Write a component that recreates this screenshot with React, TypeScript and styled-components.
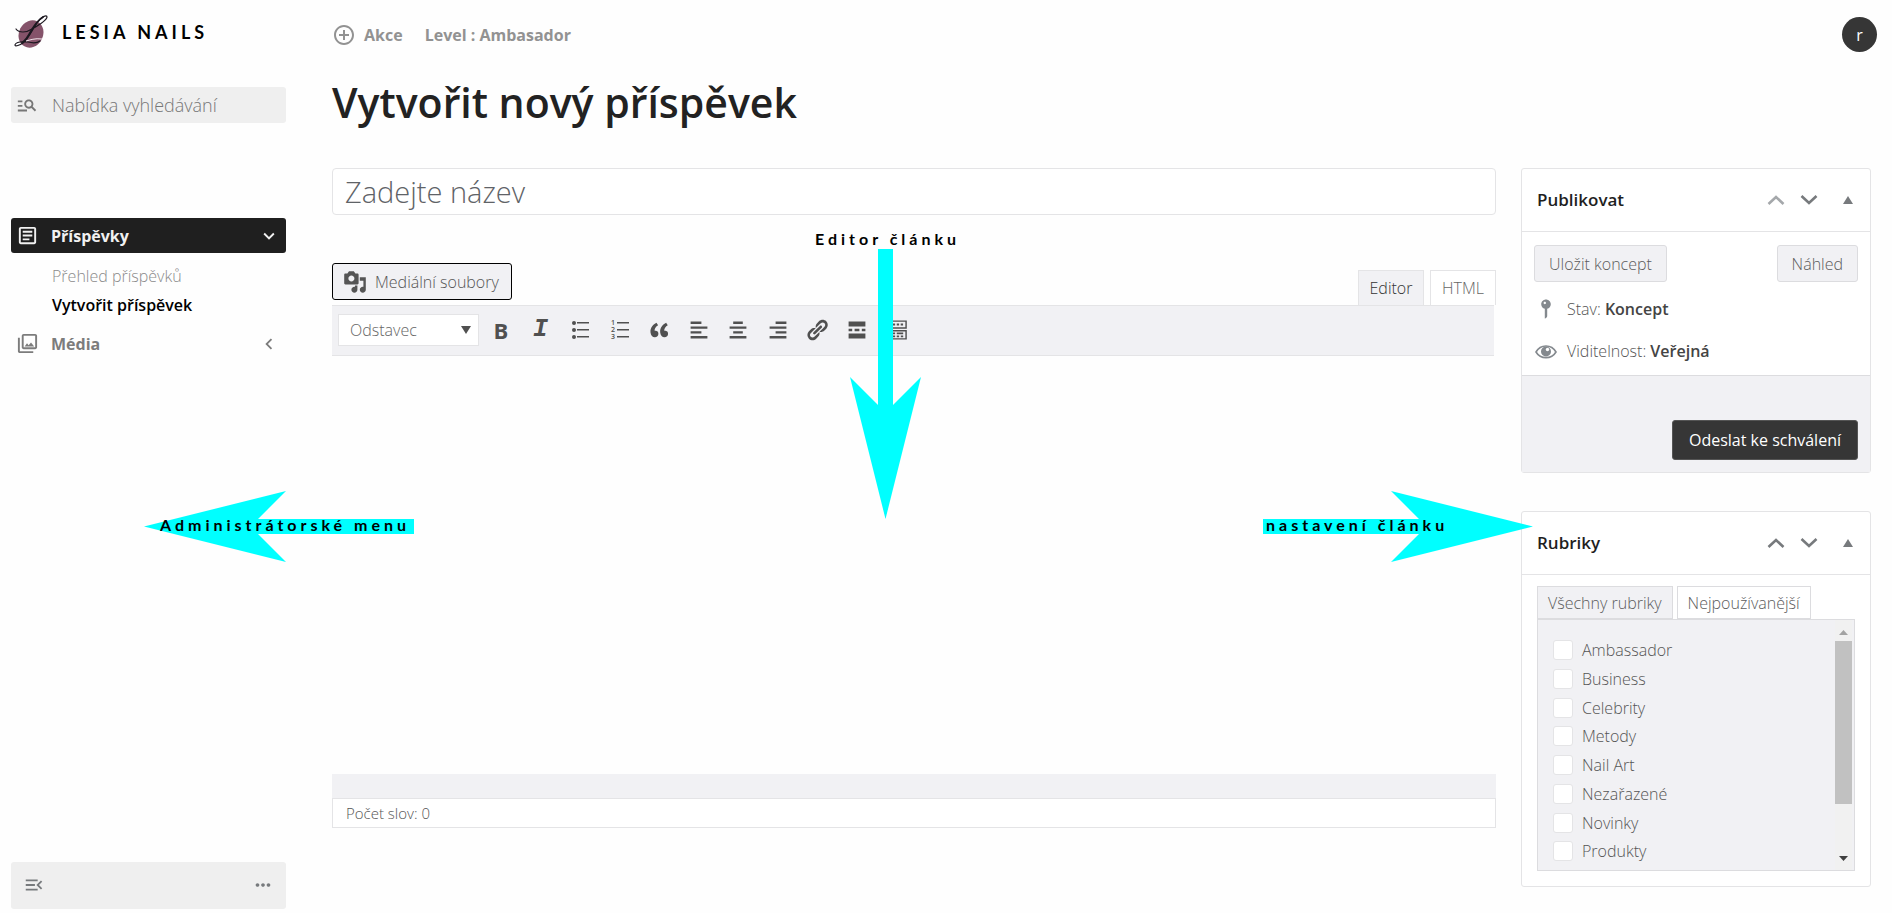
import React from "react";
import styled, { createGlobalStyle } from "styled-components";
import {
  MdAddCircleOutline,
  MdKeyboardArrowDown,
  MdKeyboardArrowLeft,
  MdManageSearch,
  MdMenuOpen,
  MdMoreHoriz,
  MdOutlineArticle,
  MdOutlinePhotoLibrary,
} from "react-icons/md";

const line = "#e4e4e6";
const soft = "#f1f1f4";
const muted = "#8a8a8a";
const ink = "#1f1f1f";

const GlobalStyle = createGlobalStyle`
  *, *::before, *::after { box-sizing: border-box; }
  body {
    margin: 0;
    background: #fefefe;
    color: #555;
    font-family: "Open Sans", "Noto Sans", sans-serif;
    font-size: 16px;
    font-weight: 300;
    line-height: 24px;
  }
  button, input, select, textarea { font: inherit; color: inherit; margin: 0; }
  button { cursor: pointer; }
  a { color: inherit; text-decoration: none; }
  svg { display: block; flex: none; }
`;

const Page = styled.div`
  position: relative;
  display: grid;
  grid-template-columns: 286px minmax(0, 1fr);
  min-height: 100vh;
  overflow: hidden;
`;

/* ---------- sidebar ---------- */

const Sidebar = styled.aside`
  display: flex;
  flex-direction: column;
  padding: 12px 0 4px 11px;
`;

const Brand = styled.a`
  display: flex;
  align-items: center;
  gap: 13px;
  height: 40px;
  color: #000;
  font-family: Lato, sans-serif;
  font-size: 18px;
  font-weight: 700;
  letter-spacing: 4px;
`;

const SearchBox = styled.label`
  display: flex;
  align-items: center;
  gap: 14px;
  height: 36px;
  margin-top: 35px;
  padding-left: 5px;
  border-radius: 3px;
  background: #efefef;
  color: #777;
  font-size: 18px;

  input {
    flex: 1;
    min-width: 0;
    padding: 0;
    border: 0;
    outline: 0;
    background: transparent;
  }
  input::placeholder { color: #777; opacity: 1; }
`;

const Nav = styled.nav`
  display: flex;
  flex-direction: column;
  margin-top: 95px;
`;

const NavItem = styled.a<{ $active?: boolean }>`
  display: flex;
  align-items: center;
  gap: 12px;
  height: 35px;
  padding: 0 6px 0 5px;
  border-radius: 3px;
  background: ${(p) => (p.$active ? ink : "transparent")};
  color: ${(p) => (p.$active ? "#f1f1f1" : "#7c7c7c")};
  font-weight: 700;

  svg:last-child { margin-left: auto; }
`;

const SubNav = styled.div`
  display: flex;
  flex-direction: column;
  gap: 5px;
  padding: 11px 0 9px 41px;
`;

const SubLink = styled.a<{ $current?: boolean }>`
  color: ${(p) => (p.$current ? "#000" : muted)};
  font-weight: ${(p) => (p.$current ? 600 : 300)};
`;

const SidebarFooter = styled.div`
  display: flex;
  align-items: center;
  justify-content: space-between;
  height: 47px;
  margin-top: auto;
  padding: 0 12px 2px;
  border-radius: 3px;
  background: #efefef;
`;

const IconButton = styled.button<{ $dim?: boolean }>`
  display: flex;
  align-items: center;
  justify-content: center;
  padding: 0;
  border: 0;
  background: transparent;
  color: ${(p) => (p.$dim ? "#a5a8ab" : "#777a7d")};
`;

/* ---------- main column ---------- */

const Main = styled.main`
  padding: 17px 15px 24px 46px;
`;

const TopBar = styled.header`
  display: flex;
  align-items: center;
  gap: 22px;
  height: 35px;
  color: #929292;
  font-weight: 700;
`;

const TopLink = styled.a`
  display: flex;
  align-items: center;
  gap: 8px;
`;

const Avatar = styled.button`
  width: 35px;
  height: 35px;
  margin-left: auto;
  padding: 0;
  border: 0;
  border-radius: 50%;
  background: #363636;
  color: #fff;
  font-weight: 400;
`;

const Title = styled.h1`
  margin: 22px 0 0;
  color: #222;
  font-size: 41px;
  font-weight: 600;
  line-height: 56px;
`;

const Columns = styled.div`
  display: grid;
  grid-template-columns: minmax(0, 1fr) 350px;
  gap: 25px;
  align-items: start;
  margin-top: 38px;
  padding-right: 6px;
`;

const Editor = styled.section`
  display: flex;
  flex-direction: column;
`;

const TitleInput = styled.input`
  width: 100%;
  height: 47px;
  padding: 0 12px;
  border: 1px solid ${line};
  border-radius: 4px;
  outline: 0;
  background: #fff;
  font-size: 29px;

  &::placeholder { color: #5f6367; opacity: 1; }
`;

const EditorBar = styled.div`
  display: flex;
  align-items: flex-start;
  justify-content: space-between;
  height: 42px;
  margin-top: 48px;
`;

const MediaButton = styled.button`
  display: flex;
  align-items: center;
  gap: 8px;
  height: 37px;
  padding: 0 12px 0 10px;
  border: 1px solid #000;
  border-radius: 3px;
  background: ${soft};
`;

const Tabs = styled.div`
  display: flex;
  align-self: flex-end;
  gap: 6px;
`;

const Tab = styled.button<{ $active?: boolean }>`
  width: 66px;
  height: 35px;
  padding: 0;
  border: 1px solid ${line};
  border-bottom: 0;
  background: ${(p) => (p.$active ? soft : "#fff")};
  color: ${(p) => (p.$active ? "#333" : "#666")};
`;

const Toolbar = styled.div`
  display: flex;
  align-items: center;
  gap: 7px;
  height: 51px;
  margin-right: 2px;
  padding: 0 0 2px 6px;
  border: solid ${line};
  border-width: 1px 0;
  background: ${soft};
`;

const FormatBox = styled.div`
  display: grid;
  align-items: center;
  width: 141px;
  height: 32px;
  border: 1px solid ${line};
  background: #fff;

  select, svg { grid-area: 1 / 1; }
  select {
    width: 100%;
    height: 30px;
    padding: 0 11px;
    border: 0;
    outline: 0;
    appearance: none;
    background: transparent;
    color: #666;
  }
  svg { justify-self: end; margin-right: 7px; pointer-events: none; }
`;

const Tools = styled.div`
  display: flex;
  justify-content: space-between;
  width: 425px;
`;

const Tool = styled.button<{ $bold?: boolean; $italic?: boolean }>`
  display: flex;
  align-items: center;
  justify-content: center;
  width: 30px;
  height: 30px;
  padding: 0;
  border: 0;
  background: transparent;
  color: #505050;
  font-family: ${(p) => (p.$italic ? '"Liberation Mono", monospace' : "inherit")};
  font-size: ${(p) => (p.$italic ? "25px" : "22px")};
  line-height: ${(p) => (p.$italic ? "30px" : "24px")};
  font-style: ${(p) => (p.$italic ? "italic" : "normal")};
  font-weight: ${(p) => (p.$bold || p.$italic ? 700 : 400)};
`;

const Canvas = styled.textarea`
  width: 100%;
  height: 418px;
  padding: 12px;
  border: 0;
  outline: 0;
  resize: none;
  background: transparent;
`;

const PathBar = styled.div`
  height: 24px;
  background: ${soft};
`;

const WordCount = styled.div`
  padding: 2px 13px;
  border: 1px solid ${line};
  background: #fff;
  font-size: 15px;
`;

/* ---------- meta boxes ---------- */

const Side = styled.div`
  display: flex;
  flex-direction: column;
  gap: 38px;
`;

const Box = styled.section`
  border: 1px solid ${line};
  border-radius: 3px;
  background: #fff;
`;

const BoxHead = styled.header`
  display: flex;
  align-items: center;
  height: 63px;
  padding: 0 17px 0 15px;
  border-bottom: 1px solid ${line};
`;

const BoxTitle = styled.h2`
  flex: 1;
  margin: 0;
  color: ${ink};
  font-size: 17px;
  font-weight: 600;
  line-height: 24px;
`;

const BoxActions = styled.div`
  display: flex;
  align-items: center;
  gap: 15px;

  button:last-child { margin-left: 10px; }
`;

const PublishBody = styled.div`
  display: flex;
  flex-direction: column;
  gap: 12px;
  padding: 13px 12px 9px;
`;

const ButtonRow = styled.div`
  display: flex;
  justify-content: space-between;
`;

const SoftButton = styled.button`
  height: 37px;
  padding: 0 14px;
  border: 1px solid #dcdcdf;
  border-radius: 3px;
  background: ${soft};
  color: #5c5c5c;
`;

const Meta = styled.p`
  display: flex;
  align-items: center;
  gap: 9px;
  height: 30px;
  margin: 0;

  svg { color: #84898e; }
  strong { color: #444; font-weight: 600; }
`;

const PublishFoot = styled.div`
  display: flex;
  justify-content: flex-end;
  padding: 44px 12px 12px;
  border-top: 1px solid #dcdcdf;
  background: ${soft};
`;

const SubmitButton = styled.button`
  height: 40px;
  padding: 0 16px;
  border: 1px solid #555;
  border-radius: 3px;
  background: #363636;
  color: #fff;
  font-weight: 400;
`;

const TermsBody = styled.div`
  padding: 11px 15px 15px;
`;

const TermTabs = styled.div`
  display: flex;
  gap: 4px;
`;

const TermTab = styled.button<{ $active?: boolean }>`
  height: 33px;
  padding: 0 10px;
  border: 1px solid #dcdcdf;
  background: ${(p) => (p.$active ? soft : "#fff")};
  color: #5c5c5c;
`;

const TermPanel = styled.div`
  display: flex;
  height: 252px;
  padding: 0 2px 0 15px;
  border: 1px solid #dcdcdf;
  background: ${soft};
  overflow: hidden;
`;

const TermList = styled.ul`
  display: flex;
  flex: 1;
  flex-direction: column;
  justify-content: space-between;
  height: 254px;
  margin: 18px 0 0;
  padding: 0;
  list-style: none;
`;

const Term = styled.label`
  display: flex;
  align-items: center;
  gap: 9px;
  height: 24px;

  input {
    flex: none;
    width: 20px;
    height: 20px;
    border: 1px solid ${line};
    border-radius: 3px;
    appearance: none;
    background: #fff;
  }
  input:checked { background: #555; }
`;

const ScrollTrack = styled.div`
  display: flex;
  flex-direction: column;
  align-items: center;
  width: 17px;
  height: 250px;
  padding: 9px 0 8px;
  background: #f1f1f1;
`;

const ScrollThumb = styled.div`
  width: 17px;
  height: 163px;
  margin: 5px 0 auto;
  background: #c1c1c1;
`;

/* ---------- callouts lying over the page ---------- */

const Callout = styled.div<{ $dir: "down" | "left" | "right" }>`
  position: absolute;
  pointer-events: none;
  ${(p) =>
    p.$dir === "down"
      ? "top: 249px; left: 850px;"
      : p.$dir === "left"
      ? "top: 491px; left: 144px;"
      : "top: 491px; right: 359px;"}

  svg { color: #0ff; }
`;

const CalloutText = styled.span<{ $dir: "down" | "left" | "right" }>`
  position: absolute;
  top: ${(p) => (p.$dir === "down" ? "-22px" : "22px")};
  left: ${(p) => (p.$dir === "down" ? "-35px" : p.$dir === "left" ? "16px" : "3px")};
  color: #000;
  font-family: Lato, sans-serif;
  font-size: 16px;
  font-weight: 700;
  letter-spacing: 4px;
  white-space: nowrap;
`;

/* ---------- drawings ---------- */

const Logo = () => (
  <svg width="38" height="36" viewBox="0 0 38 36" fill="none" aria-hidden="true">
    <ellipse cx="20" cy="20" rx="12" ry="14" transform="rotate(28 20 20)" fill="#85536a" />
    <path
      d="M5 15c3 4 10 4 16 0 7-4 15-9 15-12 0-3-6 0-10 6-5 7-8 15-14 20-3 2-8 4-8 2 0-3 9-4 13-3 4 1 8 2 12-1"
      stroke="#1c1820"
      strokeWidth="1.2"
      strokeLinecap="round"
    />
    <path d="M32 3c-5 3-9 9-12 14-2 4-5 9-9 12" stroke="#1c1820" strokeWidth="1.800" strokeLinecap="round" />
    <path d="M15 27c4-1 9-3 16-2" stroke="#f4e9ee" strokeWidth="1" />
  </svg>
);

const Glyph = ({ d, size = 24 }: { d: string; size?: number }) => (
  <svg width={size} height={size} viewBox="0 0 20 20" fill="currentColor" fillRule="evenodd" aria-hidden="true">
    <path d={d} />
  </svg>
);

const paths = {
  media:
    "M13 11V4c0-.55-.45-1-1-1h-1.67L9 1H5L3.67 3H2c-.55 0-1 .45-1 1v7c0 .55.45 1 1 1h10c.55 0 1-.45 1-1zM7 4.5c1.38 0 2.5 1.12 2.5 2.5S8.38 9.5 7 9.5 4.5 8.38 4.5 7 5.62 4.5 7 4.5zM14 6h5v10.5c0 1.38-1.12 2.5-2.5 2.5S14 17.88 14 16.5s1.12-2.5 2.5-2.5c.17 0 .34.02.5.05V9h-3V6zm-4 8.05V13h2v3.5c0 1.38-1.12 2.5-2.5 2.5S7 17.88 7 16.5 8.12 14 9.5 14c.17 0 .34.02.5.05z",
  quote:
    "M9.49 13.22c0-.74-.2-1.38-.61-1.9-.62-.78-1.83-.88-2.53-.72-.29-1.65 1.11-3.75 2.92-4.65L7.88 4c-2.73 1.3-5.42 4.28-4.96 8.05C3.21 14.43 4.59 16 6.54 16c.85 0 1.56-.25 2.12-.75s.83-1.18.83-2.03zm8.05 0c0-.74-.2-1.38-.61-1.9-.63-.78-1.83-.88-2.53-.72-.29-1.65 1.11-3.75 2.92-4.65L15.94 4c-2.73 1.3-5.41 4.28-4.95 8.05.28 2.38 1.66 3.95 3.61 3.95.85 0 1.56-.25 2.12-.75s.82-1.18.82-2.03z",
  left: "M12 5V3H3v2h9zm5 4V7H3v2h14zm-5 4v-2H3v2h9zm5 4v-2H3v2h14z",
  center: "M14 5V3H6v2h8zm3 4V7H3v2h14zm-3 4v-2H6v2h8zm3 4v-2H3v2h14z",
  right: "M17 5V3H8v2h9zm0 4V7H3v2h14zm0 4v-2H8v2h9zm0 4v-2H3v2h14z",
  link: "M17.74 2.76c1.68 1.69 1.68 4.41 0 6.1l-1.53 1.52c-1.12 1.12-2.7 1.47-4.14 1.09l2.62-2.61.76-.77.76-.76c.84-.84.84-2.2 0-3.04-.84-.85-2.2-.85-3.04 0l-.77.76-3.38 3.38c-.37-1.44-.02-3.02 1.1-4.14l1.52-1.53c1.69-1.68 4.42-1.68 6.1 0zM8.59 13.43l5.34-5.34c.42-.42.42-1.1 0-1.52-.44-.43-1.13-.39-1.53 0l-5.33 5.34c-.42.42-.42 1.1 0 1.52.44.43 1.13.39 1.52 0zm-.76 2.29l4.14-4.15c.38 1.44.03 3.02-1.09 4.14l-1.52 1.53c-1.69 1.68-4.41 1.68-6.1 0-1.68-1.68-1.68-4.42 0-6.1l1.53-1.52c1.12-1.12 2.7-1.47 4.14-1.1l-4.14 4.15c-.85.84-.85 2.2 0 3.05.84.84 2.2.84 3.04 0z",
  more: "M17 7V3H3v4h14zM6 11V9H3v2h3zm6 0V9H8v2h4zm5 0V9h-3v2h3zm0 6v-4H3v4h14z",
  sink: "M1 2h18v7H1zM2.200 3.200v4.600h15.600V3.200zM1 10h18v8H1zM2.200 11.200v5.600h15.600v-5.600zM4 4.500h2v1.800H4zm3.300 0h2v1.800h-2zm3.300 0h2v1.800h-2zm3.300 0h2v1.800h-2zM4 12h2v1.500H4zm3.300 0h2v1.500h-2zm3.300 0h5.400v1.500h-5.400zM4 14.500h5.300V16H4zm6.600 0h2V16h-2zm3.400 0h2V16h-2z",
  pin: "M14 6c0 1.860-1.280 3.410-3 3.860V16c0 1-2 2-2 2V9.860c-1.720-.45-3-2-3-3.860 0-2.210 1.790-4 4-4s4 1.790 4 4zM8 5c0 .55.45 1 1 1s1-.45 1-1-.45-1-1-1-1 .45-1 1z",
};

const List = ({ ordered }: { ordered?: boolean }) => (
  <svg width="24" height="24" viewBox="0 0 24 24" fill="currentColor" aria-hidden="true">
    {[5, 12, 19].map((y, i) => (
      <g key={y}>
        {ordered ? (
          <text x="3" y={y + 2} fontSize="7" fontWeight="600" fontFamily="Open Sans, sans-serif">
            {i + 1}
          </text>
        ) : (
          <circle cx="6" cy={y} r="2" />
        )}
        <rect x="9" y={y - 1} width="12" height="1.500" />
      </g>
    ))}
  </svg>
);

const Eye = () => (
  <svg width="24" height="24" viewBox="0 0 24 24" fill="none" stroke="currentColor" aria-hidden="true">
    <path d="M2 13c4.500-8 15.500-8 20 0-4.500 7.500-15.500 7.500-20 0z" strokeWidth="1.600" />
    <circle cx="12" cy="12.500" r="5" fill="currentColor" stroke="none" />
    <circle cx="13.500" cy="10.500" r="1.700" fill="#fff" stroke="none" />
  </svg>
);

const Chevron = ({ up }: { up?: boolean }) => (
  <svg width="18" height="12" viewBox="0 0 18 12" fill="none" stroke="currentColor" strokeWidth="2.600" aria-hidden="true">
    <path d={up ? "M1.500 10 9 3l7.500 7" : "M1.500 2 9 9l7.500-7"} />
  </svg>
);

const Triangle = ({ down, size = 10, color = "#777a7d" }: { down?: boolean; size?: number; color?: string }) => (
  <svg width={size} height={size} viewBox="0 0 10 10" fill={color} aria-hidden="true">
    <path d={down ? "M0 1h10L5 9z" : "M0 9h10L5 1z"} />
  </svg>
);

const ScrollArrow = ({ down }: { down?: boolean }) => (
  <svg width="9" height="7" viewBox="0 0 9 7" aria-hidden="true">
    <path d={down ? "M0 1h9L4.500 6z" : "M0 6h9L4.500 1z"} fill={down ? "#404040" : "#a3a3a3"} />
  </svg>
);

const BoxHeader = ({ title, first }: { title: string; first?: boolean }) => (
  <BoxHead>
    <BoxTitle>{title}</BoxTitle>
    <BoxActions>
      <IconButton $dim={first} aria-label={`${title}: nahoru`}>
        <Chevron up />
      </IconButton>
      <IconButton aria-label={`${title}: dolů`}>
        <Chevron />
      </IconButton>
      <IconButton aria-label={`${title}: sbalit`}>
        <Triangle />
      </IconButton>
    </BoxActions>
  </BoxHead>
);

const terms = ["Ambassador", "Business", "Celebrity", "Metody", "Nail Art", "Nezařazené", "Novinky", "Produkty"];

export default function App() {
  return (
    <Page>
      <GlobalStyle />

      <Sidebar>
        <Brand href="#">
          <Logo />
          LESIA NAILS
        </Brand>
        <SearchBox>
          <MdManageSearch size={22} />
          <input type="text" placeholder="Nabídka vyhledávání" aria-label="Nabídka vyhledávání" />
        </SearchBox>
        <Nav>
          <NavItem href="#" $active>
            <MdOutlineArticle size={23} />
            Příspěvky
            <MdKeyboardArrowDown size={22} />
          </NavItem>
          <SubNav>
            <SubLink href="#">Přehled příspěvků</SubLink>
            <SubLink href="#" $current>
              Vytvořit příspěvek
            </SubLink>
          </SubNav>
          <NavItem href="#">
            <MdOutlinePhotoLibrary size={23} />
            Média
            <MdKeyboardArrowLeft size={22} />
          </NavItem>
        </Nav>
        <SidebarFooter>
          <IconButton aria-label="Sbalit menu">
            <MdMenuOpen size={22} />
          </IconButton>
          <IconButton aria-label="Další">
            <MdMoreHoriz size={22} />
          </IconButton>
        </SidebarFooter>
      </Sidebar>

      <Main>
        <TopBar>
          <TopLink href="#">
            <MdAddCircleOutline size={24} />
            Akce
          </TopLink>
          <TopLink href="#">Level : Ambasador</TopLink>
          <Avatar>r</Avatar>
        </TopBar>

        <Title>Vytvořit nový příspěvek</Title>

        <Columns>
          <Editor>
            <TitleInput type="text" placeholder="Zadejte název" aria-label="Zadejte název" />
            <EditorBar>
              <MediaButton>
                <Glyph d={paths.media} />
                Mediální soubory
              </MediaButton>
              <Tabs>
                <Tab $active>Editor</Tab>
                <Tab>HTML</Tab>
              </Tabs>
            </EditorBar>
            <Toolbar>
              <FormatBox>
                <select aria-label="Formát">
                  <option>Odstavec</option>
                </select>
                <Triangle down size={10} color="#505050" />
              </FormatBox>
              <Tools>
                <Tool $bold>B</Tool>
                <Tool $italic>I</Tool>
                <Tool aria-label="Seznam s odrážkami">
                  <List />
                </Tool>
                <Tool aria-label="Číslovaný seznam">
                  <List ordered />
                </Tool>
                <Tool aria-label="Citace">
                  <Glyph d={paths.quote} />
                </Tool>
                <Tool aria-label="Zarovnat vlevo">
                  <Glyph d={paths.left} />
                </Tool>
                <Tool aria-label="Zarovnat na střed">
                  <Glyph d={paths.center} />
                </Tool>
                <Tool aria-label="Zarovnat vpravo">
                  <Glyph d={paths.right} />
                </Tool>
                <Tool aria-label="Odkaz">
                  <Glyph d={paths.link} />
                </Tool>
                <Tool aria-label="Číst dále">
                  <Glyph d={paths.more} />
                </Tool>
                <Tool aria-label="Další nástroje">
                  <Glyph d={paths.sink} />
                </Tool>
              </Tools>
            </Toolbar>
            <Canvas aria-label="Obsah" />
            <PathBar />
            <WordCount>Počet slov: 0</WordCount>
          </Editor>

          <Side>
            <Box>
              <BoxHeader title="Publikovat" first />
              <PublishBody>
                <ButtonRow>
                  <SoftButton>Uložit koncept</SoftButton>
                  <SoftButton>Náhled</SoftButton>
                </ButtonRow>
                <Meta>
                  <Glyph d={paths.pin} />
                  <span>
                    Stav: <strong>Koncept</strong>
                  </span>
                </Meta>
                <Meta>
                  <Eye />
                  <span>
                    Viditelnost: <strong>Veřejná</strong>
                  </span>
                </Meta>
              </PublishBody>
              <PublishFoot>
                <SubmitButton>Odeslat ke schválení</SubmitButton>
              </PublishFoot>
            </Box>

            <Box>
              <BoxHeader title="Rubriky" />
              <TermsBody>
                <TermTabs>
                  <TermTab $active>Všechny rubriky</TermTab>
                  <TermTab>Nejpoužívanější</TermTab>
                </TermTabs>
                <TermPanel>
                  <TermList>
                    {terms.map((name) => (
                      <li key={name}>
                        <Term>
                          <input type="checkbox" />
                          {name}
                        </Term>
                      </li>
                    ))}
                    <li>
                      <Term>
                        <input type="checkbox" aria-label="Rubrika" />
                      </Term>
                    </li>
                  </TermList>
                  <ScrollTrack>
                    <ScrollArrow />
                    <ScrollThumb />
                    <ScrollArrow down />
                  </ScrollTrack>
                </TermPanel>
              </TermsBody>
            </Box>
          </Side>
        </Columns>
      </Main>

      <Callout $dir="down">
        <svg width="71" height="270" viewBox="0 0 71 270" fill="currentColor" aria-hidden="true">
          <path d="M28 0h15v156l28-28-35.500 142L0 128l28 28z" />
        </svg>
        <CalloutText $dir="down">Editor článku</CalloutText>
      </Callout>
      <Callout $dir="left">
        <svg width="270" height="71" viewBox="0 0 270 71" fill="currentColor" aria-hidden="true">
          <path d="M0 35.500 142 0l-28 28h156v15H114l28 28z" />
        </svg>
        <CalloutText $dir="left">Administrátorské menu</CalloutText>
      </Callout>
      <Callout $dir="right">
        <svg width="270" height="71" viewBox="0 0 270 71" fill="currentColor" aria-hidden="true">
          <path d="M270 35.500 128 0l28 28H0v15h156l-28 28z" />
        </svg>
        <CalloutText $dir="right">nastavení článku</CalloutText>
      </Callout>
    </Page>
  );
}
